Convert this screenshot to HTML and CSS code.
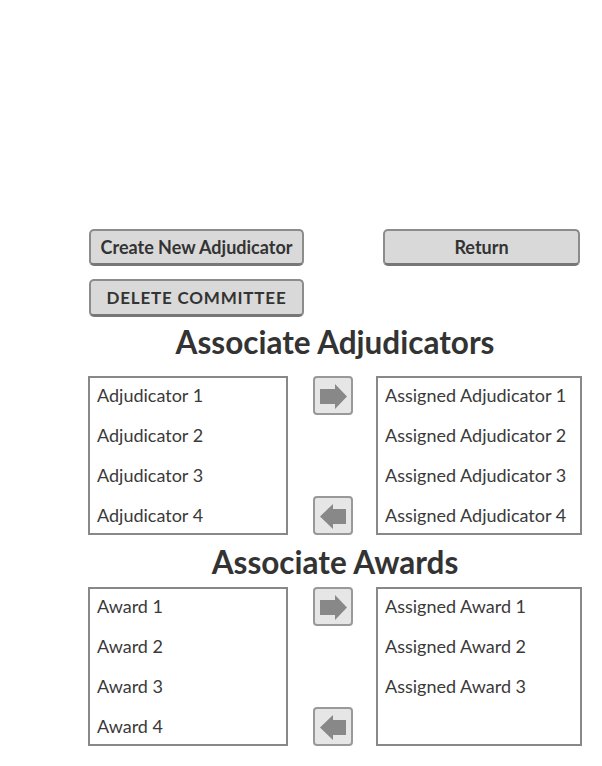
FILE: index.html
```html
<!DOCTYPE html>
<html lang="en">
<head>
    <meta charset="UTF-8">
    <meta name="viewport" content="width=device-width, initial-scale=1.0">
    <title>Committee - Adjudicators and Awards</title>
    <link rel="stylesheet" href="styles.css">
</head>
<body>
    <div class="page">
        <div class="actions">
            <button class="btn">Create New Adjudicator</button>
            <button class="btn btn-return">Return</button>
            <button class="btn btn-caps">DELETE COMMITTEE</button>
        </div>

        <section class="assoc assoc-judges">
            <h2>Associate Adjudicators</h2>
            <div class="picker">
                <ul class="list list-left">
                    <li>Adjudicator 1</li>
                    <li>Adjudicator 2</li>
                    <li>Adjudicator 3</li>
                    <li>Adjudicator 4</li>
                </ul>
                <div class="moves">
                    <button class="move" title="Assign">
                        <svg width="36" height="35" viewBox="0 0 36 35"><polygon points="5,11 20,11 20,6 32,18.5 20,31 20,26 5,26" fill="#888"/></svg>
                    </button>
                    <button class="move" title="Remove">
                        <svg width="36" height="35" viewBox="0 0 36 35"><polygon points="31,11 18,11 18,6 5,18.5 18,31 18,26 31,26" fill="#888"/></svg>
                    </button>
                </div>
                <ul class="list list-right">
                    <li>Assigned Adjudicator 1</li>
                    <li>Assigned Adjudicator 2</li>
                    <li>Assigned Adjudicator 3</li>
                    <li>Assigned Adjudicator 4</li>
                </ul>
            </div>
        </section>

        <section class="assoc assoc-awards">
            <h2>Associate Awards</h2>
            <div class="picker">
                <ul class="list list-left">
                    <li>Award 1</li>
                    <li>Award 2</li>
                    <li>Award 3</li>
                    <li>Award 4</li>
                </ul>
                <div class="moves">
                    <button class="move" title="Assign">
                        <svg width="36" height="35" viewBox="0 0 36 35"><polygon points="5,11 20,11 20,6 32,18.5 20,31 20,26 5,26" fill="#888"/></svg>
                    </button>
                    <button class="move" title="Remove">
                        <svg width="36" height="35" viewBox="0 0 36 35"><polygon points="31,11 18,11 18,6 5,18.5 18,31 18,26 31,26" fill="#888"/></svg>
                    </button>
                </div>
                <ul class="list list-right">
                    <li>Assigned Award 1</li>
                    <li>Assigned Award 2</li>
                    <li>Assigned Award 3</li>
                </ul>
            </div>
        </section>
    </div>
</body>
</html>
```

FILE: styles.css
```css
* {
    margin: 0;
    padding: 0;
    box-sizing: border-box;
}

body {
    font-family: Lato, "Open Sans", sans-serif;
    background-color: #fff;
    color: #333;
}

.page {
    width: 494px;
    margin-left: 88px;
    padding-top: 229px;
}

.actions {
    display: grid;
    grid-template-columns: 215px 1fr 197px;
    row-gap: 13px;
    padding: 0 2px 0 1px;
}

.btn {
    height: 37px;
    background: #d9d9d9;
    border: 2px solid #8c8c8c;
    border-bottom: 3px solid #777;
    border-radius: 5px;
    font-family: Lato, "Open Sans", sans-serif;
    font-size: 18px;
    font-weight: bold;
    color: #333;
}

.btn-return {
    grid-column: 3;
}

.btn-caps {
    grid-column: 1;
    height: 38px;
    font-size: 17px;
    letter-spacing: 0.8px;
}

.assoc h2 {
    text-align: center;
    font-size: 31.5px;
    line-height: 34px;
    color: #333;
}

.assoc-judges h2 {
    padding: 8px 0 17px;
}

.assoc-awards h2 {
    padding: 10px 0 8px;
}

.picker {
    display: grid;
    grid-template-columns: 200px 1fr 206px;
    height: 159px;
}

.list {
    list-style: none;
    border: 2px solid #888;
    padding-left: 7px;
    overflow: hidden;
}

.list li {
    font-size: 18px;
    line-height: 34px;
    margin-bottom: 6px;
    color: #3a3a3a;
    white-space: nowrap;
}

.moves {
    display: flex;
    flex-direction: column;
    justify-content: space-between;
    align-items: center;
    padding-left: 1px;
}

.move {
    width: 40px;
    height: 39px;
    background: #e6e6e6;
    border: 2px solid #999;
    border-radius: 4px;
    display: flex;
    align-items: center;
    justify-content: center;
}
```
